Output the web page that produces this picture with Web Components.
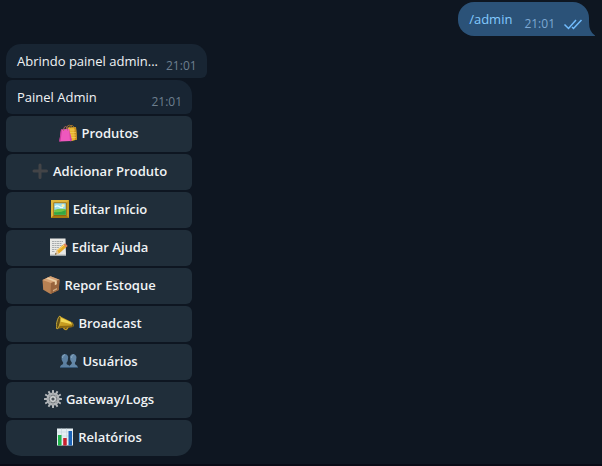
<!DOCTYPE html>
<html lang="pt-BR">
<head>
<meta charset="utf-8">
<meta name="viewport" content="width=device-width, initial-scale=1">
<title>Painel Admin</title>
<style>
html, body { margin: 0; min-height: 100%; background: #0e1621; }
body { font-family: "Open Sans", "Noto Sans", sans-serif; font-size: 13px; line-height: 18px; color: #f0f3f5; }
</style>
</head>
<body>
<chat-view>
  <chat-message out time="21:01">/admin</chat-message>
  <chat-message class="gap" time="21:01">Abrindo painel admin...</chat-message>
  <inline-keyboard>
    <chat-message slot="message" time="21:01">Painel Admin</chat-message>
    <keyboard-button icon="bags">Produtos</keyboard-button>
    <keyboard-button icon="plus">Adicionar Produto</keyboard-button>
    <keyboard-button icon="frame">Editar Início</keyboard-button>
    <keyboard-button icon="memo">Editar Ajuda</keyboard-button>
    <keyboard-button icon="box">Repor Estoque</keyboard-button>
    <keyboard-button icon="horn">Broadcast</keyboard-button>
    <keyboard-button icon="users">Usuários</keyboard-button>
    <keyboard-button icon="gear">Gateway/Logs</keyboard-button>
    <keyboard-button icon="chart" last>Relatórios</keyboard-button>
  </inline-keyboard>
</chat-view>
<script>
const teeth = Array.from({ length: 12 }, (_, i) =>
  `<rect x="8" y="0" width="2" height="4" rx=".5" transform="rotate(${i * 30} 9 9)"/>`).join('');

const icons = {
  bags: `<path d="M7.500 5Q8 .8 10.500 1.200T13.500 4.500M10 4Q11.500 .3 13.500 1.500T15 4.500" fill="none" stroke="#a8762b" stroke-width=".9"/>
    <path d="M9 3.500L17 3.200 18 15.500 13 17 9 16Z" fill="#e9b52d"/><path d="M15 3.300L17 3.200 18 15.500 16 16Z" fill="#c98d20"/>
    <path d="M11 6h5M11 8.500h6M11 11h6M12 13.500h5" stroke="#f6d267" stroke-width=".6"/>
    <path d="M2 5.500L10 4.800 12 17 .3 17.500Z" fill="#ee58bd"/><path d="M2 5.500L3 5.400 1.500 17.400 .3 17.500Z" fill="#c93a9b"/><path d="M10 4.800L13 16 12 17.500 11 17Z" fill="#d643a7"/>
    <path d="M4.500 7Q4.500 2.500 6.500 2.500T8.500 6.500" fill="none" stroke="#b96b62" stroke-width=".9"/>`,
  plus: `<path d="M9 3v12.500M3 9h12.500" stroke="#434447" stroke-width="3" stroke-linecap="round"/>`,
  frame: `<rect width="18" height="18" rx=".5" fill="#c99a23"/><path d="M0 0h18l-3 3H3v12l-3 3z" fill="#e0b63b"/><path d="M18 18H0l3-3h12z" fill="#a8780e"/>
    <rect x="2.500" y="2.500" width="13" height="13" fill="#775914"/><rect x="3.200" y="3.200" width="11.600" height="11.600" fill="#9eddec"/>
    <circle cx="12" cy="5.500" r="1.500" fill="#fff3a2"/><path d="M4 7q2-2 4-.5t4 1" stroke="#e9ffff" stroke-width="1.300" fill="none"/>
    <path d="M3.200 10q5-2 11.600-1v5.800H3.200z" fill="#73c549"/><path d="M3.200 12q6 1 11.600-2v4.800H3.200z" fill="#35a643"/>`,
  memo: `<path d="M0 .5h15.500l.5 17H0z" fill="#e8e8e5"/><path d="M0 16.500h16v1H0z" fill="#b3b7b7"/>
    <path d="M2 3.500h11M2 5.500h10M2 7.500h11M2 9.500h7M2 11.500h5M2 13.500h3" stroke="#989ca0" stroke-width=".8" stroke-dasharray="2 .5"/>
    <path d="M5 16.800L7 12 14.500 5.800 17 8.500 9 15.500Z" fill="#e8ac27"/><path d="M7.500 12.500L15 6.300" stroke="#ffd66b"/>
    <path d="M5 16.800L7 12 9 15.500Z" fill="#e7c69b"/><path d="M5 16.800l.8-2 .8 1.300z" fill="#333"/><path d="M13.500 6.500l1.700-1.300 2.500 2.900-1.500 1.200z" fill="#dc8063"/>`,
  box: `<path d="M.5 4L8.500 .3 17.500 3.800 16.800 14 8.500 18 1.200 13.800Z" fill="#b88153"/><path d="M.5 4L8.500 .3 17.500 3.800 9 7Z" fill="#d7a477"/>
    <path d="M9 7L17.500 3.800 16.800 14 8.500 18Z" fill="#98643d"/><path d="M4 2.400L12.800 5.700v3.600l2-1V4.800L6 1.400Z" fill="#ecd0a6"/>
    <path d="M11 14l4-2v1.500l-4 2z" fill="#d0aa80"/>`,
  horn: `<path d="M7.500 14q3 3.500 4.500-1" fill="none" stroke="#c99a22" stroke-width="1.500"/>
    <path d="M3.500 2L16.500 8.500Q18.500 10.500 17 13L.5 14.500Z" fill="#c79c20"/><path d="M4.500 3.500L16.500 9l.5 1.500L4 7.500Z" fill="#f2d855"/>
    <path d="M2.500 12L17 11.500V13L.5 14.500Z" fill="#8b6812"/><ellipse cx="2.500" cy="8.500" rx="1.700" ry="6.600" transform="rotate(13 2.500 8.500)" fill="#634f14" stroke="#d5b43b" stroke-width=".8"/>
    <path d="M15.500 8.300q2 2.200.8 4.700" stroke="#71550e" fill="none"/>`,
  users: `<path d="M9 16q-.2-3 2-3.500l1-1.500Q9.500 8 10 4.500 10.500 2 13 2t3.500 3q0 4-1.700 6l.5 1.500q2.500.5 2.700 3.500z" fill="#6488a8"/>
    <path d="M0 16q0-3 2.500-3.500L3.300 11Q1 8 1.500 4.500 2 2 4.700 2t3.500 3q0 4-1.800 6l.6 1.500q3 .5 3 3.500z" fill="#5c80a1"/>
    <path d="M2.500 6q0-3 2.500-3.300M11.500 6q0-3 2-3.300" stroke="#8ba9bf" fill="none"/><path d="M0 15.500h18" stroke="#365979"/>`,
  gear: `<g fill="#b4b8bb">${teeth}</g><circle cx="9" cy="9" r="5.400" fill="#777c80" stroke="#b0b4b7" stroke-width="2.400"/>
    <path d="M9 3v12M3 9h12M5 5l8 8M13 5l-8 8" stroke="#9a9ea1"/><circle cx="9" cy="9" r="2.300" fill="#4a5258" stroke="#d0d3d4" stroke-width="1.400"/>`,
  chart: `<path d="M1 .5h16v17H1z" fill="#e5eef3"/><path d="M1 4h16M1 8h16M1 12h16M5.500 .5v17M10.500 .5v17" stroke="#c1d3dc" stroke-width=".6"/>
    <path d="M2 7h3.500v10.500H2z" fill="#1fb44b"/><path d="M7.200 10h3.500v7.500H7.200z" fill="#c9202d"/><path d="M12.500 3H16v14.500h-3.500z" fill="#1c64b9"/>`
};

class ChatView extends HTMLElement {
  constructor() {
    super();
    this.attachShadow({ mode: 'open' }).innerHTML = `
      <style>
        :host { display: flex; flex-direction: column; box-sizing: border-box; min-height: 100vh; background: #0e1621; }
        main { flex: 1; display: flex; flex-direction: column; align-items: flex-start; gap: 2px; padding: 2px 13px 6px 6px; }
        ::slotted([out]) { align-self: flex-end; }
        ::slotted(.gap) { margin-top: 6px; }
        footer { height: 2px; background: #090b16; }
      </style>
      <main><slot></slot></main><footer></footer>`;
  }
}

class ChatMessage extends HTMLElement {
  constructor() {
    super();
    const out = this.hasAttribute('out');
    this.attachShadow({ mode: 'open' }).innerHTML = `
      <style>
        :host { display: flex; justify-content: space-between; gap: 8px; position: relative; box-sizing: border-box; padding: 8px 10px 3px 11px; border-radius: 15px 15px 6px 6px; background: #182533; }
        :host([slot]) { border-radius: 6px 15px 6px 6px; }
        :host([out]) { gap: 12px; padding-right: 6px; border-radius: 16px 16px 0 16px; background: #2b5278; color: #83caff; }
        .meta { display: flex; gap: 8px; padding-top: 5px; color: #6d7f8f; font-size: 12px; }
        :host([out]) .meta { color: #7da8d3; }
        .checks { width: 20px; height: 18px; }
        .tail { position: absolute; left: 100%; bottom: 0; width: 6px; height: 14px; }
      </style>
      <span><slot></slot></span>
      <span class="meta"><time>${this.getAttribute('time')}</time>${out ? `
        <svg class="checks" viewBox="0 0 20 18" fill="none" stroke="#72bcfd" stroke-width="1.500" role="img" aria-label="Lida"><path d="M1.500 9.500l4 4L13 5M9 12l1.500 1.500L18.500 5"/></svg>` : ''}</span>
      ${out ? `<svg class="tail" viewBox="0 0 6 14"><path d="M0 0Q0 10 6 13.500V14H0Z" fill="#2b5278"/></svg>` : ''}`;
  }
}

class InlineKeyboard extends HTMLElement {
  constructor() {
    super();
    this.attachShadow({ mode: 'open' }).innerHTML = `
      <style>:host { display: grid; gap: 2px; }</style>
      <slot name="message"></slot><slot></slot>`;
  }
}

class KeyboardButton extends HTMLElement {
  constructor() {
    super();
    this.attachShadow({ mode: 'open' }).innerHTML = `
      <style>
        :host { display: block; }
        button { display: flex; align-items: center; justify-content: center; gap: 4px; width: 100%; height: 36px; padding: 0 25px 2px; border: 0; border-radius: 6px; background: #202e3a; color: #f0f3f5; font: inherit; font-weight: 600; white-space: nowrap; cursor: pointer; }
        button:hover { background: #283846; }
        :host([last]) button { border-radius: 6px 6px 15px 15px; }
        svg { flex: none; width: 18px; height: 18px; }
      </style>
      <button type="button"><svg viewBox="0 0 18 18" aria-hidden="true">${icons[this.getAttribute('icon')]}</svg><span><slot></slot></span></button>`;
  }
}

customElements.define('chat-view', ChatView);
customElements.define('chat-message', ChatMessage);
customElements.define('inline-keyboard', InlineKeyboard);
customElements.define('keyboard-button', KeyboardButton);
</script>
</body>
</html>
